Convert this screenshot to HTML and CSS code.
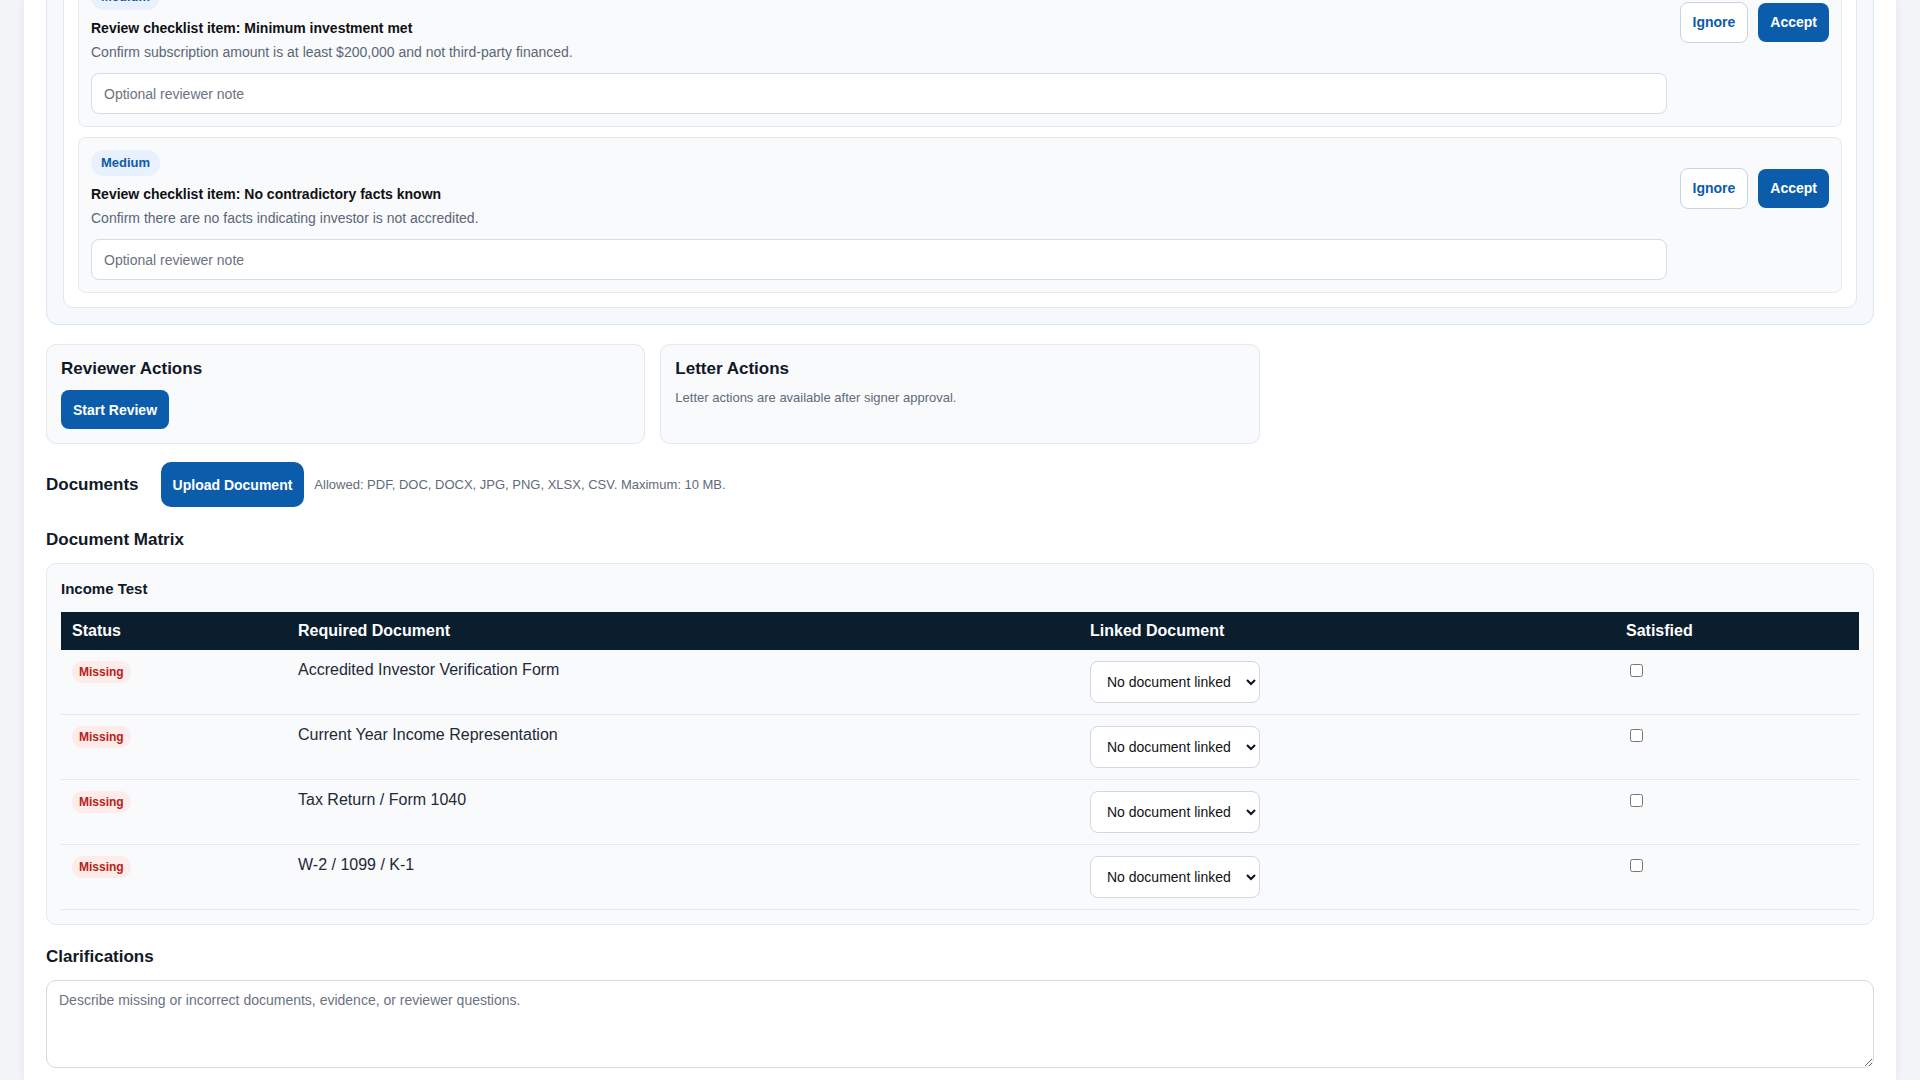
FILE: index.html
```html
<!DOCTYPE html>
<html lang="en">
<head>
    <meta charset="UTF-8">
    <meta name="viewport" content="width=device-width, initial-scale=1.0">
    <title>Accreditation Review</title>
    <link rel="stylesheet" href="styles.css">
</head>
<body>
    <div class="shell">
        <main class="panel">

            <!-- checklist items -->
            <section class="checklist">
                <div class="checklist-card">
                    <div class="item">
                        <div class="item-main">
                            <span class="badge">Medium</span>
                            <div class="item-title">Review checklist item: Minimum investment met</div>
                            <div class="item-desc">Confirm subscription amount is at least $200,000 and not third-party financed.</div>
                        </div>
                        <div class="item-actions">
                            <button class="btn btn-outline">Ignore</button>
                            <button class="btn btn-primary">Accept</button>
                        </div>
                        <input class="note" type="text" placeholder="Optional reviewer note">
                    </div>
                    <div class="item">
                        <div class="item-main">
                            <span class="badge">Medium</span>
                            <div class="item-title">Review checklist item: No contradictory facts known</div>
                            <div class="item-desc">Confirm there are no facts indicating investor is not accredited.</div>
                        </div>
                        <div class="item-actions">
                            <button class="btn btn-outline">Ignore</button>
                            <button class="btn btn-primary">Accept</button>
                        </div>
                        <input class="note" type="text" placeholder="Optional reviewer note">
                    </div>
                </div>
            </section>

            <!-- actions -->
            <div class="action-grid">
                <div class="action-card">
                    <h3>Reviewer Actions</h3>
                    <button class="btn btn-primary">Start Review</button>
                </div>
                <div class="action-card">
                    <h3>Letter Actions</h3>
                    <p class="muted">Letter actions are available after signer approval.</p>
                </div>
            </div>

            <!-- documents -->
            <div class="docs-bar">
                <h2>Documents</h2>
                <button class="btn btn-primary btn-upload">Upload Document</button>
                <span class="hint">Allowed: PDF, DOC, DOCX, JPG, PNG, XLSX, CSV. Maximum: 10 MB.</span>
            </div>

            <h2 class="section-title">Document Matrix</h2>
            <div class="matrix">
                <h3>Income Test</h3>
                <table>
                    <colgroup>
                        <col class="col-status">
                        <col class="col-required">
                        <col class="col-linked">
                        <col>
                    </colgroup>
                    <thead>
                        <tr>
                            <th>Status</th>
                            <th>Required Document</th>
                            <th>Linked Document</th>
                            <th>Satisfied</th>
                        </tr>
                    </thead>
                    <tbody>
                        <tr>
                            <td><span class="tag">Missing</span></td>
                            <td>Accredited Investor Verification Form</td>
                            <td><select><option>No document linked</option></select></td>
                            <td><input type="checkbox"></td>
                        </tr>
                        <tr>
                            <td><span class="tag">Missing</span></td>
                            <td>Current Year Income Representation</td>
                            <td><select><option>No document linked</option></select></td>
                            <td><input type="checkbox"></td>
                        </tr>
                        <tr>
                            <td><span class="tag">Missing</span></td>
                            <td>Tax Return / Form 1040</td>
                            <td><select><option>No document linked</option></select></td>
                            <td><input type="checkbox"></td>
                        </tr>
                        <tr>
                            <td><span class="tag">Missing</span></td>
                            <td>W-2 / 1099 / K-1</td>
                            <td><select><option>No document linked</option></select></td>
                            <td><input type="checkbox"></td>
                        </tr>
                    </tbody>
                </table>
            </div>

            <h2 class="section-title clar-title">Clarifications</h2>
            <textarea class="clarify" placeholder="Describe missing or incorrect documents, evidence, or reviewer questions."></textarea>

        </main>
    </div>
</body>
</html>
```

FILE: styles.css
```css
body {
    margin: 0;
    background-color: #f2f4f7;
    font-family: "Liberation Sans", Arial, sans-serif;
    color: #111827;
}
.shell {
    padding: 0 24px;
}
.panel {
    display: flow-root;
    background: #fff;
    padding: 0 22px 10px;
    min-height: 100vh;
    box-sizing: border-box;
    box-shadow: 0 0 10px rgba(15, 23, 42, 0.06);
}

/* checklist */
.checklist {
    margin-top: -61px;
    background: #f5f9fe;
    border: 1px solid #d9e4f1;
    border-radius: 12px;
    padding: 16px;
}
.checklist-card {
    background: #fff;
    border: 1px solid #e1e7ef;
    border-radius: 10px;
    padding: 14px;
    display: flex;
    flex-direction: column;
    gap: 10px;
}
.item {
    background: #f8fafc;
    border: 1px solid #e2e8f0;
    border-radius: 8px;
    padding: 12px;
    display: grid;
    grid-template-columns: 1fr auto;
    column-gap: 13px;
    row-gap: 13px;
    align-items: center;
}
.item-main {
    display: flex;
    flex-direction: column;
    align-items: flex-start;
}
.badge {
    font-size: 13px;
    font-weight: bold;
    line-height: 16px;
    color: #0b5cab;
    background: #e8f1fd;
    border-radius: 999px;
    padding: 5px 10px;
    margin-bottom: 10px;
}
.item-title {
    font-size: 14px;
    font-weight: bold;
    line-height: 16px;
    color: #111;
    margin-bottom: 8px;
}
.item-desc {
    font-size: 14px;
    line-height: 16px;
    color: #5b6676;
}
.item-actions {
    display: flex;
    align-items: center;
    gap: 10px;
}
.note {
    height: 41px;
    box-sizing: border-box;
    padding: 0 12px;
    border: 1px solid #d3dce7;
    border-radius: 8px;
    background: #fff;
    font-family: "Liberation Sans", Arial, sans-serif;
    font-size: 14px;
    color: #111;
}
.note::placeholder, .clarify::placeholder {
    color: #6b7280;
}

/* buttons */
.btn {
    font-family: "Liberation Sans", Arial, sans-serif;
    font-size: 14px;
    font-weight: bold;
    line-height: 16px;
    padding: 11.5px 12px;
    border-radius: 8px;
    border: none;
    cursor: pointer;
}
.btn-primary {
    background: #0b5cab;
    color: #fff;
}
.btn-outline {
    background: #fff;
    color: #0b5cab;
    border: 1px solid #c8d4e2;
}
.btn-upload {
    padding: 14.5px 12px;
    border-radius: 10px;
}

/* actions */
.action-grid {
    display: grid;
    grid-template-columns: repeat(3, 1fr);
    gap: 15px;
    margin-top: 19px;
}
.action-card {
    background: #f8fafc;
    border: 1px solid #e2e8f0;
    border-radius: 10px;
    padding: 14px;
}
.action-card h3 {
    margin: 0 0 11px;
    font-size: 17px;
}
.muted {
    margin: 0;
    font-size: 13px;
    color: #5f6b7a;
}

/* documents */
.docs-bar {
    display: flex;
    align-items: center;
    gap: 10px;
    margin-top: 18px;
}
.docs-bar h2 {
    margin: 0 12px 0 0;
    font-size: 17px;
}
.hint {
    font-size: 13px;
    color: #5f6b7a;
}
.section-title {
    margin: 22.5px 0 13.5px;
    font-size: 17px;
}
.clar-title {
    margin: 22px 0 13px;
}

/* matrix */
.matrix {
    background: #f8fafc;
    border: 1px solid #e2e8f0;
    border-radius: 10px;
    padding: 14px;
}
.matrix h3 {
    margin: 0 0 13px;
    font-size: 15px;
    line-height: 21px;
}
table {
    width: 100%;
    border-collapse: collapse;
    table-layout: fixed;
}
.col-status { width: 226px; }
.col-required { width: 792px; }
.col-linked { width: 536px; }
th {
    background: #0a1e2d;
    color: #fff;
    text-align: left;
    font-size: 16px;
    padding: 10px 11px;
}
td {
    padding: 11px;
    border-bottom: 1px solid #e2e8f0;
    vertical-align: top;
    font-size: 16px;
    color: #1f2937;
}
.tag {
    display: inline-block;
    vertical-align: top;
    font-size: 12px;
    font-weight: bold;
    line-height: 14px;
    padding: 4px 7px;
    border-radius: 999px;
    color: #b42318;
    background: #fdecea;
}
select {
    width: 170px;
    height: 42px;
    padding: 0 8px 0 12px;
    border: 1px solid #cfd8e3;
    border-radius: 8px;
    background: #fff;
    font-family: "Liberation Sans", Arial, sans-serif;
    font-size: 14px;
    color: #111;
}

/* clarifications */
.clarify {
    display: block;
    width: 100%;
    height: 88px;
    box-sizing: border-box;
    padding: 11px 12px;
    border: 1px solid #d3dce7;
    border-radius: 10px;
    font-family: "Liberation Sans", Arial, sans-serif;
    font-size: 14px;
}
```
